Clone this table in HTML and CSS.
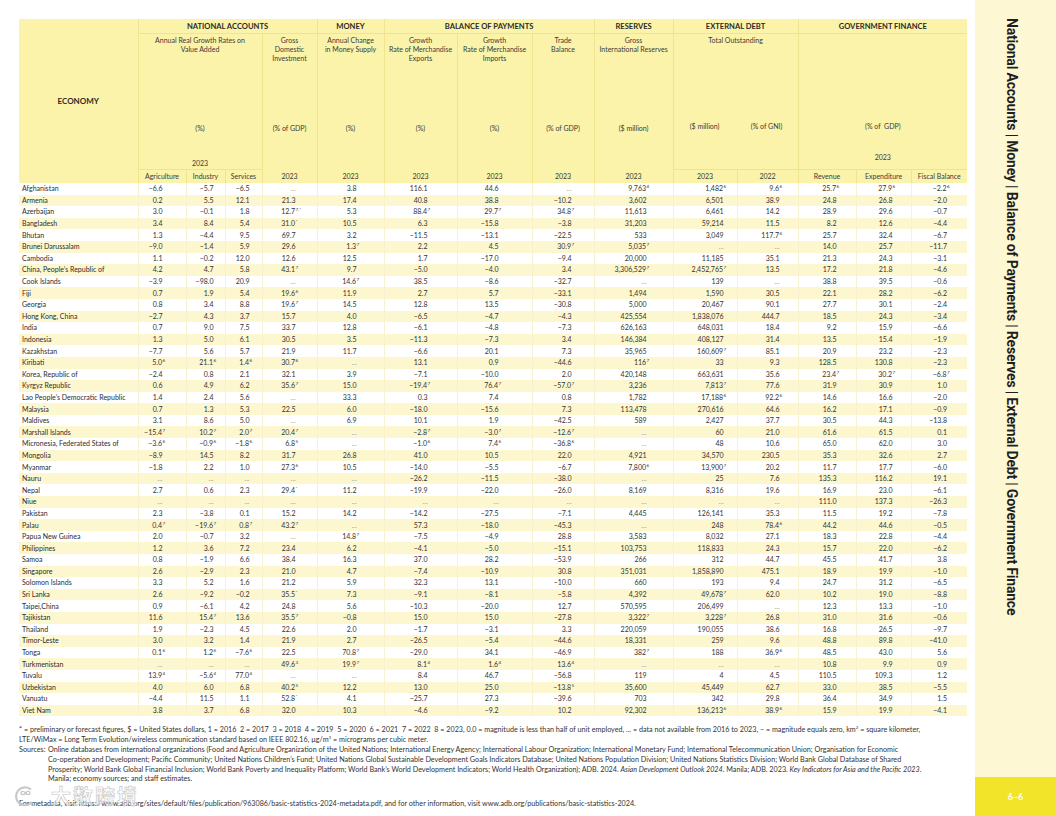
FILE: index.html
```html
<!DOCTYPE html>
<html lang="en">
<head>
<meta charset="utf-8">
<title>Basic Statistics 2024</title>
<link rel="stylesheet" href="styles.css">
</head>
<body>
<div class="page">
<div class="main">
<table class="stat">
<colgroup>
<col style="width:119px"><col style="width:48px"><col style="width:39px"><col style="width:37px"><col style="width:55px"><col style="width:67px"><col style="width:73px"><col style="width:75px"><col style="width:62px"><col style="width:79px"><col style="width:64px"><col style="width:61px"><col style="width:58px"><col style="width:55px"><col style="width:56px">
</colgroup>
<thead>
<tr class="ra">
<th rowspan="3" class="eco">ECONOMY</th>
<th colspan="4">NATIONAL ACCOUNTS</th>
<th>MONEY</th>
<th colspan="3">BALANCE OF PAYMENTS</th>
<th>RESERVES</th>
<th colspan="2">EXTERNAL DEBT</th>
<th colspan="3">GOVERNMENT FINANCE</th>
</tr>
<tr class="rb">
<th colspan="3"><div class="hb"><div class="d">Annual Real Growth Rates on<br>Value Added</div><div class="u">(%)</div><div class="y">2023</div></div></th>
<th><div class="hb"><div class="d">Gross<br>Domestic<br>Investment</div><div class="u">(% of GDP)</div></div></th>
<th><div class="hb"><div class="d">Annual Change<br>in Money Supply</div><div class="u">(%)</div></div></th>
<th><div class="hb"><div class="d">Growth<br>Rate of Merchandise<br>Exports</div><div class="u">(%)</div></div></th>
<th><div class="hb"><div class="d">Growth<br>Rate of Merchandise<br>Imports</div><div class="u">(%)</div></div></th>
<th><div class="hb"><div class="d">Trade<br>Balance</div><div class="u">(% of GDP)</div></div></th>
<th><div class="hb"><div class="d">Gross<br>International Reserves</div><div class="u">($ million)</div></div></th>
<th colspan="2"><div class="hb"><div class="d d2">Total Outstanding</div><div class="u2"><span>($ million)</span><span>(% of GNI)</span></div></div></th>
<th colspan="3"><div class="hb"><div class="d d2"></div><div class="u">(% of&nbsp; GDP)</div><div class="y y2">2023</div></div></th>
</tr>
<tr class="rc">
<th class="tl">Agriculture</th><th class="tl">Industry</th><th class="tl">Services</th>
<th>2023</th><th>2023</th><th>2023</th><th>2023</th><th>2023</th><th>2023</th>
<th class="tl">2023</th><th class="tl">2022</th>
<th class="tl">Revenue</th><th class="tl">Expenditure</th><th class="tl">Fiscal Balance</th>
</tr>
</thead>
<tbody>
<tr><th>Afghanistan</th><td>−6.6</td><td>−5.7</td><td>−6.5</td><td class="na">...</td><td>3.8</td><td>116.1</td><td>44.6</td><td class="na">...</td><td>9,763<sup class="s">4</sup></td><td>1,482<sup class="s">6</sup></td><td>9.6<sup class="s">6</sup></td><td>25.7<sup class="s">6</sup></td><td>27.9<sup class="s">6</sup></td><td>−2.2<sup class="s">6</sup></td></tr>
<tr><th>Armenia</th><td>0.2</td><td>5.5</td><td>12.1</td><td>21.3</td><td>17.4</td><td>40.8</td><td>38.8</td><td>−10.2</td><td>3,602</td><td>6,501</td><td>38.9</td><td>24.8</td><td>26.8</td><td>−2.0</td></tr>
<tr><th>Azerbaijan</th><td>3.0</td><td>−0.1</td><td>1.8</td><td>12.7<sup class="s">7,*</sup></td><td>5.3</td><td>88.4<sup class="s">7</sup></td><td>29.7<sup class="s">7</sup></td><td>34.8<sup class="s">7</sup></td><td>11,613</td><td>6,461</td><td>14.2</td><td>28.9</td><td>29.6</td><td>−0.7</td></tr>
<tr><th>Bangladesh</th><td>3.4</td><td>8.4</td><td>5.4</td><td>31.0<sup class="s">*</sup></td><td>10.5</td><td>6.3</td><td>−15.8</td><td>−3.8</td><td>31,203</td><td>59,214</td><td>11.5</td><td>8.2</td><td>12.6</td><td>−4.4</td></tr>
<tr><th>Bhutan</th><td>1.3</td><td>−4.4</td><td>9.5</td><td>69.7</td><td>3.2</td><td>−11.5</td><td>−13.1</td><td>−22.5</td><td>533</td><td>3,049</td><td>117.7<sup class="s">6</sup></td><td>25.7</td><td>32.4</td><td>−6.7</td></tr>
<tr><th>Brunei Darussalam</th><td>−9.0</td><td>−1.4</td><td>5.9</td><td>29.6</td><td>1.3<sup class="s">7</sup></td><td>2.2</td><td>4.5</td><td>30.9<sup class="s">7</sup></td><td>5,035<sup class="s">7</sup></td><td class="na">...</td><td class="na">...</td><td>14.0</td><td>25.7</td><td>−11.7</td></tr>
<tr><th>Cambodia</th><td>1.1</td><td>−0.2</td><td>12.0</td><td>12.6</td><td>12.5</td><td>1.7</td><td>−17.0</td><td>−9.4</td><td>20,000</td><td>11,185</td><td>35.1</td><td>21.3</td><td>24.3</td><td>−3.1</td></tr>
<tr><th>China, People’s Republic of</th><td>4.2</td><td>4.7</td><td>5.8</td><td>43.1<sup class="s">7</sup></td><td>9.7</td><td>−5.0</td><td>−4.0</td><td>3.4</td><td>3,306,529<sup class="s">7</sup></td><td>2,452,765<sup class="s">7</sup></td><td>13.5</td><td>17.2</td><td>21.8</td><td>−4.6</td></tr>
<tr><th>Cook Islands</th><td>−3.9</td><td>−98.0</td><td>20.9</td><td class="na">...</td><td>14.6<sup class="s">7</sup></td><td>38.5</td><td>−8.6</td><td>−32.7</td><td class="na">...</td><td>139</td><td class="na">...</td><td>38.8</td><td>39.5</td><td>−0.6</td></tr>
<tr><th>Fiji</th><td>0.7</td><td>1.9</td><td>5.4</td><td>19.6<sup class="s">6</sup></td><td>11.9</td><td>2.7</td><td>5.7</td><td>−33.1</td><td>1,494</td><td>1,590</td><td>30.5</td><td>22.1</td><td>28.2</td><td>−6.2</td></tr>
<tr><th>Georgia</th><td>0.8</td><td>3.4</td><td>8.8</td><td>19.6<sup class="s">7</sup></td><td>14.5</td><td>12.8</td><td>13.5</td><td>−30.8</td><td>5,000</td><td>20,467</td><td>90.1</td><td>27.7</td><td>30.1</td><td>−2.4</td></tr>
<tr><th>Hong Kong, China</th><td>−2.7</td><td>4.3</td><td>3.7</td><td>15.7</td><td>4.0</td><td>−6.5</td><td>−4.7</td><td>−4.3</td><td>425,554</td><td>1,838,076</td><td>444.7</td><td>18.5</td><td>24.3</td><td>−3.4</td></tr>
<tr><th>India</th><td>0.7</td><td>9.0</td><td>7.5</td><td>33.7</td><td>12.8</td><td>−6.1</td><td>−4.8</td><td>−7.3</td><td>626,163</td><td>648,031</td><td>18.4</td><td>9.2</td><td>15.9</td><td>−6.6</td></tr>
<tr><th>Indonesia</th><td>1.3</td><td>5.0</td><td>6.1</td><td>30.5</td><td>3.5</td><td>−11.3</td><td>−7.3</td><td>3.4</td><td>146,384</td><td>408,127</td><td>31.4</td><td>13.5</td><td>15.4</td><td>−1.9</td></tr>
<tr><th>Kazakhstan</th><td>−7.7</td><td>5.6</td><td>5.7</td><td>21.9</td><td>11.7</td><td>−6.6</td><td>20.1</td><td>7.3</td><td>35,965</td><td>160,609<sup class="s">7</sup></td><td>85.1</td><td>20.9</td><td>23.2</td><td>−2.3</td></tr>
<tr><th>Kiribati</th><td>5.0<sup class="s">6</sup></td><td>21.1<sup class="s">6</sup></td><td>1.4<sup class="s">6</sup></td><td>30.7<sup class="s">6</sup></td><td class="na">...</td><td>13.1</td><td>0.9</td><td>−44.6</td><td>116<sup class="s">7</sup></td><td>33</td><td>9.3</td><td>128.5</td><td>130.8</td><td>−2.3</td></tr>
<tr><th>Korea, Republic of</th><td>−2.4</td><td>0.8</td><td>2.1</td><td>32.1</td><td>3.9</td><td>−7.1</td><td>−10.0</td><td>2.0</td><td>420,148</td><td>663,631</td><td>35.6</td><td>23.4<sup class="s">7</sup></td><td>30.2<sup class="s">7</sup></td><td>−6.8<sup class="s">7</sup></td></tr>
<tr><th>Kyrgyz Republic</th><td>0.6</td><td>4.9</td><td>6.2</td><td>35.6<sup class="s">7</sup></td><td>15.0</td><td>−19.4<sup class="s">7</sup></td><td>76.4<sup class="s">7</sup></td><td>−57.0<sup class="s">7</sup></td><td>3,236</td><td>7,813<sup class="s">7</sup></td><td>77.6</td><td>31.9</td><td>30.9</td><td>1.0</td></tr>
<tr><th>Lao People’s Democratic Republic</th><td>1.4</td><td>2.4</td><td>5.6</td><td class="na">...</td><td>33.3</td><td>0.3</td><td>7.4</td><td>0.8</td><td>1,782</td><td>17,188<sup class="s">6</sup></td><td>92.2<sup class="s">6</sup></td><td>14.6</td><td>16.6</td><td>−2.0</td></tr>
<tr><th>Malaysia</th><td>0.7</td><td>1.3</td><td>5.3</td><td>22.5</td><td>6.0</td><td>−18.0</td><td>−15.6</td><td>7.3</td><td>113,478</td><td>270,616</td><td>64.6</td><td>16.2</td><td>17.1</td><td>−0.9</td></tr>
<tr><th>Maldives</th><td>3.1</td><td>8.6</td><td>5.0</td><td class="na">...</td><td>6.9</td><td>10.1</td><td>1.9</td><td>−42.5</td><td>589</td><td>2,427</td><td>37.7</td><td>30.5</td><td>44.3</td><td>−13.8</td></tr>
<tr><th>Marshall Islands</th><td>−15.4<sup class="s">7</sup></td><td>10.2<sup class="s">7</sup></td><td>2.0<sup class="s">7</sup></td><td>20.4<sup class="s">7</sup></td><td class="na">...</td><td>−2.8<sup class="s">7</sup></td><td>−3.0<sup class="s">7</sup></td><td>−12.6<sup class="s">7</sup></td><td class="na">...</td><td>60</td><td>21.0</td><td>61.6</td><td>61.5</td><td>0.1</td></tr>
<tr><th>Micronesia, Federated States of</th><td>−3.6<sup class="s">6</sup></td><td>−0.9<sup class="s">6</sup></td><td>−1.8<sup class="s">6</sup></td><td>6.8<sup class="s">5</sup></td><td class="na">...</td><td>−1.0<sup class="s">6</sup></td><td>7.4<sup class="s">6</sup></td><td>−36.8<sup class="s">6</sup></td><td class="na">...</td><td>48</td><td>10.6</td><td>65.0</td><td>62.0</td><td>3.0</td></tr>
<tr><th>Mongolia</th><td>−8.9</td><td>14.5</td><td>8.2</td><td>31.7</td><td>26.8</td><td>41.0</td><td>10.5</td><td>22.0</td><td>4,921</td><td>34,570</td><td>230.5</td><td>35.3</td><td>32.6</td><td>2.7</td></tr>
<tr><th>Myanmar</th><td>−1.8</td><td>2.2</td><td>1.0</td><td>27.3<sup class="s">6</sup></td><td>10.5</td><td>−14.0</td><td>−5.5</td><td>−6.7</td><td>7,800<sup class="s">6</sup></td><td>13,900<sup class="s">7</sup></td><td>20.2</td><td>11.7</td><td>17.7</td><td>−6.0</td></tr>
<tr><th>Nauru</th><td class="na">...</td><td class="na">...</td><td class="na">...</td><td class="na">...</td><td class="na">...</td><td>−26.2</td><td>−11.5</td><td>−38.0</td><td class="na">...</td><td>25</td><td>7.6</td><td>135.3</td><td>116.2</td><td>19.1</td></tr>
<tr><th>Nepal</th><td>2.7</td><td>0.6</td><td>2.3</td><td>29.4<sup class="s">*</sup></td><td>11.2</td><td>−19.9</td><td>−22.0</td><td>−26.0</td><td>8,169</td><td>8,316</td><td>19.6</td><td>16.9</td><td>23.0</td><td>−6.1</td></tr>
<tr><th>Niue</th><td class="na">...</td><td class="na">...</td><td class="na">...</td><td class="na">...</td><td class="na">...</td><td class="na">...</td><td class="na">...</td><td class="na">...</td><td class="na">...</td><td class="na">...</td><td class="na">...</td><td>111.0</td><td>137.3</td><td>−26.3</td></tr>
<tr><th>Pakistan</th><td>2.3</td><td>−3.8</td><td>0.1</td><td>15.2</td><td>14.2</td><td>−14.2</td><td>−27.5</td><td>−7.1</td><td>4,445</td><td>126,141</td><td>35.3</td><td>11.5</td><td>19.2</td><td>−7.8</td></tr>
<tr><th>Palau</th><td>0.4<sup class="s">7</sup></td><td>−19.6<sup class="s">7</sup></td><td>0.8<sup class="s">7</sup></td><td>43.2<sup class="s">7</sup></td><td class="na">...</td><td>57.3</td><td>−18.0</td><td>−45.3</td><td class="na">...</td><td>248</td><td>78.4<sup class="s">6</sup></td><td>44.2</td><td>44.6</td><td>−0.5</td></tr>
<tr><th>Papua New Guinea</th><td>2.0</td><td>−0.7</td><td>3.2</td><td class="na">...</td><td>14.8<sup class="s">7</sup></td><td>−7.5</td><td>−4.9</td><td>28.8</td><td>3,583</td><td>8,032</td><td>27.1</td><td>18.3</td><td>22.8</td><td>−4.4</td></tr>
<tr><th>Philippines</th><td>1.2</td><td>3.6</td><td>7.2</td><td>23.4</td><td>6.2</td><td>−4.1</td><td>−5.0</td><td>−15.1</td><td>103,753</td><td>118,833</td><td>24.3</td><td>15.7</td><td>22.0</td><td>−6.2</td></tr>
<tr><th>Samoa</th><td>0.8</td><td>−1.9</td><td>6.6</td><td>38.4</td><td>16.3</td><td>37.0</td><td>28.2</td><td>−53.9</td><td>266</td><td>312</td><td>44.7</td><td>45.5</td><td>41.7</td><td>3.8</td></tr>
<tr><th>Singapore</th><td>2.6</td><td>−2.9</td><td>2.3</td><td>21.0</td><td>4.7</td><td>−7.4</td><td>−10.9</td><td>30.8</td><td>351,031</td><td>1,858,890</td><td>475.1</td><td>18.9</td><td>19.9</td><td>−1.0</td></tr>
<tr><th>Solomon Islands</th><td>3.3</td><td>5.2</td><td>1.6</td><td>21.2</td><td>5.9</td><td>32.3</td><td>13.1</td><td>−10.0</td><td>660</td><td>193</td><td>9.4</td><td>24.7</td><td>31.2</td><td>−6.5</td></tr>
<tr><th>Sri Lanka</th><td>2.6</td><td>−9.2</td><td>−0.2</td><td>35.5<sup class="s">*</sup></td><td>7.3</td><td>−9.1</td><td>−8.1</td><td>−5.8</td><td>4,392</td><td>49,678<sup class="s">7</sup></td><td>62.0</td><td>10.2</td><td>19.0</td><td>−8.8</td></tr>
<tr><th>Taipei,China</th><td>0.9</td><td>−6.1</td><td>4.2</td><td>24.8</td><td>5.6</td><td>−10.3</td><td>−20.0</td><td>12.7</td><td>570,595</td><td>206,499</td><td class="na">...</td><td>12.3</td><td>13.3</td><td>−1.0</td></tr>
<tr><th>Tajikistan</th><td>11.6</td><td>15.4<sup class="s">7</sup></td><td>13.6</td><td>35.5<sup class="s">7</sup></td><td>−0.8</td><td>15.0</td><td>15.0</td><td>−27.8</td><td>3,322<sup class="s">7</sup></td><td>3,228<sup class="s">7</sup></td><td>26.8</td><td>31.0</td><td>31.6</td><td>−0.6</td></tr>
<tr><th>Thailand</th><td>1.9</td><td>−2.3</td><td>4.5</td><td>22.6</td><td>2.0</td><td>−1.7</td><td>−3.1</td><td>3.3</td><td>220,059</td><td>190,055</td><td>38.6</td><td>16.8</td><td>26.5</td><td>−9.7</td></tr>
<tr><th>Timor-Leste</th><td>3.0</td><td>3.2</td><td>1.4</td><td>21.9</td><td>2.7</td><td>−26.5</td><td>−5.4</td><td>−44.6</td><td>18,331</td><td>259</td><td>9.6</td><td>48.8</td><td>89.8</td><td>−41.0</td></tr>
<tr><th>Tonga</th><td>0.1<sup class="s">6</sup></td><td>1.2<sup class="s">6</sup></td><td>−7.6<sup class="s">6</sup></td><td>22.5</td><td>70.8<sup class="s">7</sup></td><td>−29.0</td><td>34.1</td><td>−46.9</td><td>382<sup class="s">7</sup></td><td>188</td><td>36.9<sup class="s">6</sup></td><td>48.5</td><td>43.0</td><td>5.6</td></tr>
<tr><th>Turkmenistan</th><td class="na">...</td><td class="na">...</td><td class="na">...</td><td>49.6<sup class="s">3</sup></td><td>19.9<sup class="s">7</sup></td><td>8.1<sup class="s">4</sup></td><td>1.6<sup class="s">4</sup></td><td>13.6<sup class="s">4</sup></td><td class="na">...</td><td class="na">...</td><td class="na">...</td><td>10.8</td><td>9.9</td><td>0.9</td></tr>
<tr><th>Tuvalu</th><td>13.9<sup class="s">4</sup></td><td>−5.6<sup class="s">4</sup></td><td>77.0<sup class="s">4</sup></td><td class="na">...</td><td class="na">...</td><td>8.4</td><td>46.7</td><td>−56.8</td><td>119</td><td>4</td><td>4.5</td><td>110.5</td><td>109.3</td><td>1.2</td></tr>
<tr><th>Uzbekistan</th><td>4.0</td><td>6.0</td><td>6.8</td><td>40.2<sup class="s">5</sup></td><td>12.2</td><td>13.0</td><td>25.0</td><td>−13.8<sup class="s">5</sup></td><td>35,600</td><td>45,449</td><td>62.7</td><td>33.0</td><td>38.5</td><td>−5.5</td></tr>
<tr><th>Vanuatu</th><td>−4.4</td><td>11.5</td><td>1.1</td><td>52.8<sup class="s">*</sup></td><td>4.1</td><td>−25.7</td><td>27.3</td><td>−39.6</td><td>703</td><td>342</td><td>29.8</td><td>36.4</td><td>34.9</td><td>1.5</td></tr>
<tr><th>Viet Nam</th><td>3.8</td><td>3.7</td><td>6.8</td><td>32.0</td><td>10.3</td><td>−4.6</td><td>−9.2</td><td>10.2</td><td>92,302</td><td>136,213<sup class="s">6</sup></td><td>38.9<sup class="s">6</sup></td><td>15.9</td><td>19.9</td><td>−4.1</td></tr>
</tbody>
</table>

<div class="notes">
<div class="ln">* = preliminary or forecast figures, $ = United States dollars, 1 = 2016&nbsp; 2 = 2017&nbsp; 3 = 2018&nbsp; 4 = 2019&nbsp; 5 = 2020&nbsp; 6 = 2021&nbsp; 7 = 2022&nbsp; 8 = 2023, 0.0 = magnitude is less than half of unit employed, ... = data not available from 2016 to 2023, – = magnitude equals zero, km<sup>2</sup> = square kilometer,</div>
<div class="ln">LTE/WiMax = Long Term Evolution/wireless communication standard based on IEEE 802.16, µg/m<sup>3</sup> = micrograms per cubic meter.</div>
<div class="src">
<div class="lbl">Sources:</div>
<div class="txt">
<div class="ln">Online databases from international organizations (Food and Agriculture Organization of the United Nations; International Energy Agency; International Labour Organization; International Monetary Fund; International Telecommunication Union; Organisation for Economic</div>
<div class="ln">Co-operation and Development; Pacific Community; United Nations Children’s Fund; United Nations Global Sustainable Development Goals Indicators Database; United Nations Population Division; United Nations Statistics Division; World Bank Global Database of Shared</div>
<div class="ln">Prosperity; World Bank Global Financial Inclusion; World Bank Poverty and Inequality Platform; World Bank’s World Development Indicators; World Health Organization); ADB. 2024. <i>Asian Development Outlook 2024</i>. Manila; ADB. 2023. <i>Key Indicators for Asia and the Pacific 2023</i>.</div>
<div class="ln">Manila; economy sources; and staff estimates.</div>
</div>
</div>
<div class="ln meta">For metadata, visit https://www.adb.org/sites/default/files/publication/963086/basic-statistics-2024-metadata.pdf, and for other information, visit www.adb.org/publications/basic-statistics-2024.</div>
</div>

<div class="wm">
<svg class="wm-logo" width="30" height="22" viewBox="0 0 30 22"><path d="M20 4.5A9 9 0 1 0 21 17" fill="none" stroke="#c8c8c8" stroke-width="2.2"/><path d="M10 8c0-2.2 3-2.2 4.5 0s4.5 2.2 4.5 0-3-2.2-4.5 0-4.5 2.2-4.5 0z" fill="none" stroke="#c8c8c8" stroke-width="1.4"/></svg>
<span class="wm-txt">大数跨境</span>
</div>
</div>

<aside class="side">
<div class="side-title">National Accounts | Money | Balance of Payments | Reserves | External Debt | Government Finance</div>
<div class="pg">6–6</div>
</aside>
</div>
</body>
</html>
```

FILE: styles.css
```css
* { box-sizing: border-box; }
html, body { margin: 0; padding: 0; }
body {
  width: 1056px;
  height: 816px;
  overflow: hidden;
  background: #ffffff;
  color: #333333;
  font-family: Lato, "Noto Sans", "Liberation Sans", sans-serif;
}
.page { display: flex; height: 816px; }
.main { width: 975px; padding: 19px 0 0 19px; position: relative; }

/* table */
.stat {
  border-collapse: collapse;
  table-layout: fixed;
  width: 948px;
}
.stat th, .stat td { padding: 0; white-space: nowrap; }

.stat thead th {
  background: #fcf3aa;
  font-weight: normal;
  font-size: 7px;
  color: #3a3a3a;
  text-align: center;
  border-left: 1px solid #efe48f;
  border-right: 1px solid #efe48f;
  vertical-align: top;
}
.stat thead th:first-child { border-left: none; }
.stat thead tr > th:last-child { border-right: none; }
.ra th {
  height: 14px;
  font-weight: 700 !important;
  font-size: 7.6px !important;
  color: #2a2a2a !important;
  border-bottom: 1px solid #efe48f;
  vertical-align: middle !important;
}
.stat thead th.eco {
  vertical-align: middle;
  font-size: 8px !important;
  border-bottom: none;
  border-left: none;
}
.rb th { height: 136px; }
.rc th { height: 14px; vertical-align: middle !important; font-size: 7px; }
.rc th.tl { border-top: 1px solid #efe48f; }

.hb { height: 135px; display: flex; flex-direction: column; padding-top: 2px; line-height: 9.3px; }
.hb .d { height: 88px; }
.hb .d2 { height: 86px; }
.hb .u { line-height: 9px; }
.hb .y { margin-top: 26px; line-height: 9px; }
.hb .y2 { margin-top: 22px; }
.u2 { display: flex; line-height: 9px; }
.u2 span { flex: 1; }

/* body */
.stat tbody tr { height: 11.6px; }
.stat tbody tr:nth-child(even) { background: #fdf7cf; }
.stat tbody th, .stat tbody td {
  font-size: 7px;
  line-height: 11px;
  height: 11.6px;
  color: #333333;
  border-left: 1px solid #f7f1cf;
}
.stat tbody th {
  font-weight: normal;
  text-align: left;
  padding-left: 3px;
  border-left: none;
  color: #2c2c2c;
}
.stat tbody td { text-align: right; }
.stat tbody td.na { color: #9a9a9a; }
.stat tbody td:nth-child(2) { padding-right: 23px; }
.stat tbody td:nth-child(3) { padding-right: 11px; }
.stat tbody td:nth-child(4) { padding-right: 12px; }
.stat tbody td:nth-child(5) { padding-right: 21px; }
.stat tbody td:nth-child(6) { padding-right: 27px; }
.stat tbody td:nth-child(7) { padding-right: 29px; }
.stat tbody td:nth-child(8) { padding-right: 33px; }
.stat tbody td:nth-child(9) { padding-right: 22px; }
.stat tbody td:nth-child(10) { padding-right: 26px; }
.stat tbody td:nth-child(11) { padding-right: 13px; }
.stat tbody td:nth-child(12) { padding-right: 18px; }
.stat tbody td:nth-child(13) { padding-right: 19px; }
.stat tbody td:nth-child(14) { padding-right: 18px; }
.stat tbody td:nth-child(15) { padding-right: 20px; }

.s {
  display: inline-block;
  width: 0;
  height: 0;
  font-size: 4.6px;
  line-height: 0;
  vertical-align: baseline;
  position: relative;
  top: -3px;
  padding-left: 0.5px;
  white-space: nowrap;
  text-align: left;
}

/* notes */
.notes { margin-top: 9px; font-size: 7.2px; line-height: 9.8px; color: #333333; }
.notes .ln { white-space: nowrap; }
.notes sup { font-size: 4.5px; line-height: 0; vertical-align: 3px; }
.src { display: flex; }
.src .lbl { width: 29px; flex: none; }
.notes .meta { margin-top: 15px; }

/* watermark */
.wm {
  position: absolute;
  left: 11px;
  top: 785px;
  display: flex;
  align-items: center;
  gap: 10px;
}
.wm-txt {
  font-family: "Noto Sans CJK SC", sans-serif;
  font-size: 20px;
  line-height: 22px;
  font-weight: 700;
  color: rgba(255,255,255,0.55);
  -webkit-text-stroke: 0.7px #c9c9c9;
  letter-spacing: 2px;
}

/* sidebar */
.side {
  width: 81px;
  height: 816px;
  background: #fdf8d3;
  display: flex;
  flex-direction: column;
}
.side-title {
  flex: 1;
  writing-mode: vertical-rl;
  font-family: Roboto, "Liberation Sans", sans-serif;
  font-weight: 700;
  font-size: 14px;
  letter-spacing: -0.2px;
  color: #1e1e1e;
  padding-top: 18px;
  align-self: center;
  margin-right: 7px;
  white-space: nowrap;
}
.pg {
  height: 39px;
  background: #f2e428;
  color: #ffffff;
  font-family: Lato, sans-serif;
  font-weight: 700;
  font-size: 9px;
  display: flex;
  align-items: center;
  justify-content: center;
}
```
